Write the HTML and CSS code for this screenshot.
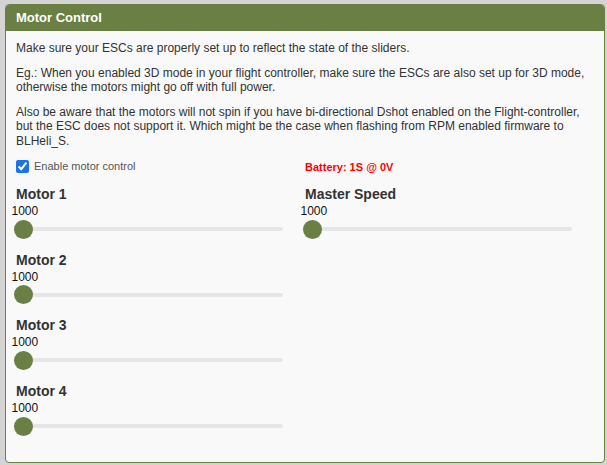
FILE: index.html
```html
<!DOCTYPE html>
<html>
<head>
<meta charset="utf-8">
<link rel="stylesheet" href="styles.css">
</head>
<body>
<div class="panel">
  <div class="panel-head">Motor Control</div>
  <div class="panel-body">
    <p>Make sure your ESCs are properly set up to reflect the state of the sliders.</p>
    <p>Eg.: When you enabled 3D mode in your flight controller, make sure the ESCs are also set up for 3D mode, otherwise the motors might go off with full power.</p>
    <p>Also be aware that the motors will not spin if you have bi-directional Dshot enabled on the Flight-controller, but the ESC does not support it. Which might be the case when flashing from RPM enabled firmware to BLHeli_S.</p>
    <div class="columns">
      <div class="col">
        <label class="enable"><input type="checkbox" checked><span>Enable motor control</span></label>
        <div class="motor">
          <div class="motor-label">Motor 1</div>
          <div class="motor-value">1000</div>
          <input class="slider" type="range" min="1000" max="2000" value="1000">
        </div>
        <div class="motor">
          <div class="motor-label">Motor 2</div>
          <div class="motor-value">1000</div>
          <input class="slider" type="range" min="1000" max="2000" value="1000">
        </div>
        <div class="motor">
          <div class="motor-label">Motor 3</div>
          <div class="motor-value">1000</div>
          <input class="slider" type="range" min="1000" max="2000" value="1000">
        </div>
        <div class="motor">
          <div class="motor-label">Motor 4</div>
          <div class="motor-value">1000</div>
          <input class="slider" type="range" min="1000" max="2000" value="1000">
        </div>
      </div>
      <div class="col">
        <div class="battery">Battery: 1S @ 0V</div>
        <div class="motor">
          <div class="motor-label">Master Speed</div>
          <div class="motor-value">1000</div>
          <input class="slider" type="range" min="1000" max="2000" value="1000">
        </div>
      </div>
    </div>
  </div>
</div>
</body>
</html>
```
FILE: styles.css
```css
html, body {
  margin: 0;
  padding: 0;
  background: #d4d4d4;
}
body {
  font-family: "Liberation Sans", Arial, sans-serif;
  padding: 4px 2px 0 5px;
  height: 465px;
  box-sizing: border-box;
}
.panel {
  width: 600px;
  height: 459px;
  box-sizing: border-box;
  border: 1px solid #6a7f43;
  border-radius: 4px;
  background: #f9f9f9;
  overflow: hidden;
}
.panel-head {
  background: #6a7f43;
  color: #fff;
  font-weight: bold;
  font-size: 13px;
  height: 26px;
  line-height: 25px;
  padding-left: 10px;
}
.panel-body {
  padding: 10px 10px 0 10px;
  color: #333;
}
.panel-body p {
  margin: 0 0 10px 0;
  font-size: 12px;
  line-height: 14.5px;
}
.columns {
  display: flex;
  margin-top: 5px;
}
.col {
  width: 289px;
  display: flex;
  flex-direction: column;
}
.enable {
  display: flex;
  align-items: center;
  height: 16px;
  font-size: 11px;
  color: #555;
}
.enable input {
  margin: 0 5px 0 0;
  width: 13px;
  height: 13px;
  accent-color: #1a73e8;
}
.battery {
  height: 16px;
  line-height: 19px;
  font-size: 11px;
  font-weight: bold;
  color: #f00;
}
.motor {
  margin-top: 11px;
  margin-bottom: 0.7px;
}
.motor-label {
  font-size: 14px;
  font-weight: bold;
  line-height: 18px;
  color: #333;
}
.motor-value {
  font-size: 12px;
  line-height: 14px;
  margin: 1px 0 0 -4.5px;
  color: #111;
}
.slider {
  -webkit-appearance: none;
  appearance: none;
  display: block;
  width: 269px;
  height: 20px;
  margin: 1px 0 0 -2px;
  padding: 0;
  background: transparent;
}
.slider::-webkit-slider-runnable-track {
  height: 4px;
  background: #e6e6e6;
  border-radius: 2px;
}
.slider::-webkit-slider-thumb {
  -webkit-appearance: none;
  appearance: none;
  width: 19px;
  height: 19px;
  border-radius: 50%;
  background: #6a7f43;
  margin-top: -7.5px;
  border: none;
}
```
